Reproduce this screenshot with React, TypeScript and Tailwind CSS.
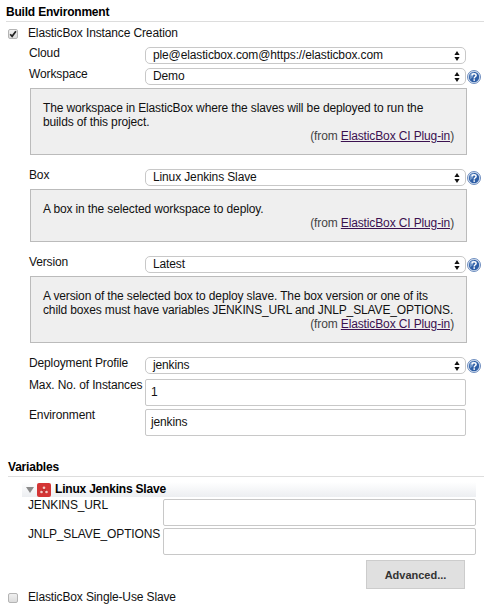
import type { ReactNode } from 'react';

function Checkbox({ checked = false }: { checked?: boolean }) {
  return (
    <span className="flex h-[10px] w-[10px] shrink-0 items-center justify-center rounded-[2px] border border-[#b4b4b4] bg-linear-to-b from-[#f0f0f0] to-[#dcdcdc]">
      {checked && (
        <svg viewBox="0 0 8 8" className="h-2 w-2 shrink-0" fill="none" stroke="#222" strokeWidth="1.7">
          <path d="M1.2 4.2 L3.1 6.3 L6.9 1.2" />
        </svg>
      )}
    </span>
  );
}

function HelpIcon() {
  return (
    <svg viewBox="0 0 14 14" className="mt-[2px] ml-px h-[14px] w-[14px] shrink-0">
      <circle cx="7" cy="7" r="6.5" fill="#dfe8f4" stroke="#5f81b8" strokeWidth="0.9" />
      <circle cx="7" cy="7" r="5.2" fill="#2f5fa6" />
      <path d="M2.6 5.4 A4.7 4.7 0 0 1 7 2.2 L6 7 L3 9.4 Z" fill="#7398cb" />
      <path d="M5 5.4 C5 3.1 9.1 3.1 9.1 5.4 C9.1 6.8 7.2 6.7 7.2 8.4" fill="none" stroke="#fff" strokeWidth="1.5" />
      <rect x="6.4" y="9.3" width="1.6" height="1.5" fill="#fff" />
    </svg>
  );
}

function Label({ children }: { children: ReactNode }) {
  return <div className="w-[116px] shrink-0 whitespace-nowrap">{children}</div>;
}

function SelectRow({ label, value, help = false }: { label: string; value: string; help?: boolean }) {
  return (
    <div className="flex h-[17px] pl-[29px]">
      <div className="-mt-px">
        <Label>{label}</Label>
      </div>
      <div className="flex h-[17px] w-[321px] shrink-0 items-start justify-between rounded-[5px] border border-[#c8c8c8] bg-white pr-[5px] pl-[7px]">
        <span>{value}</span>
        <svg viewBox="0 0 6 10" className="mt-[3px] h-[10px] w-[6px]" fill="#111">
          <path d="M3 0 L5.6 4 H0.4 Z M3 10 L5.6 6 H0.4 Z" />
        </svg>
      </div>
      {help && <HelpIcon />}
    </div>
  );
}

function HelpPanel({ children }: { children: ReactNode }) {
  return (
    <div className="mt-[3px] ml-[30px] w-[437px] border border-[#bbb] bg-[#efefef] pt-[12px] pr-[12px] pb-[11px] pl-[12px] whitespace-nowrap">
      {children}
      <div className="text-right text-[#444]">
        (from <span className="text-[#3b1150] underline">ElasticBox CI Plug-in</span>)
      </div>
    </div>
  );
}

function InputRow({ label, value }: { label: string; value: string }) {
  return (
    <div className="flex h-[27px] pl-[29px]">
      <div className="-mt-px">
        <Label>{label}</Label>
      </div>
      <div className="h-[27px] w-[321px] rounded-[2px] border border-[#c8c8c8] bg-white pt-[5px] pl-[5px]">{value}</div>
    </div>
  );
}

function VariableRow({ name }: { name: string }) {
  return (
    <div className="flex h-[27px] pl-[28px]">
      <div className="-mt-px w-[135px] shrink-0 whitespace-nowrap">{name}</div>
      <div className="h-[27px] w-[313px] rounded-[2px] border border-[#c8c8c8] bg-white" />
    </div>
  );
}

export default function App() {
  return (
    <div className="h-[611px] w-[491px] overflow-hidden bg-white font-['Liberation_Sans',Arial,sans-serif] text-[12px] leading-[14px] tracking-[-0.13px] text-[#111]">
      <div className="ml-[6px] h-[22px] w-[478px] border-b border-[#ddd] pt-[5px] font-bold tracking-[-0.2px] text-black">
        Build Environment
      </div>
      <div className="flex h-[25px] items-start gap-[10px] pt-[4px] pl-[8px]">
        <div className="mt-[3px]">
          <Checkbox checked />
        </div>
        <span>ElasticBox Instance Creation</span>
      </div>
      <SelectRow label="Cloud" value="ple@elasticbox.com@https://elasticbox.com" />
      <div className="h-1" />
      <SelectRow label="Workspace" value="Demo" help />
      <HelpPanel>
        The workspace in ElasticBox where the slaves will be deployed to run the
        <br />
        builds of this project.
      </HelpPanel>
      <div className="h-[14px]" />
      <SelectRow label="Box" value="Linux Jenkins Slave" help />
      <HelpPanel>A box in the selected workspace to deploy.</HelpPanel>
      <div className="h-[14px]" />
      <SelectRow label="Version" value="Latest" help />
      <HelpPanel>
        A version of the selected box to deploy slave. The box version or one of its
        <br />
        child boxes must have variables JENKINS_URL and JNLP_SLAVE_OPTIONS.
      </HelpPanel>
      <div className="h-[14px]" />
      <SelectRow label="Deployment Profile" value="jenkins" help />
      <div className="mt-[5px] flex flex-col gap-[3px]">
        <InputRow label="Max. No. of Instances" value="1" />
        <InputRow label="Environment" value="jenkins" />
      </div>
      <div className="mt-[24px] ml-[8px] h-[17px] w-[476px] border-b border-[#ddd] font-bold tracking-[-0.2px] text-black">
        Variables
      </div>
      <div className="mt-[5px] ml-[22px] flex h-[15px] w-[454px] items-start bg-linear-to-b from-white to-[#eceef1] font-bold tracking-[-0.2px] text-black">
        <svg viewBox="0 0 8 6" className="mt-[5px] ml-1 h-[6px] w-2" fill="#8c8c8c">
          <path d="M0 0 H8 L4 6 Z" />
        </svg>
        <svg viewBox="0 0 14 14" className="mt-px ml-[3px] h-[14px] w-[14px]">
          <rect width="14" height="14" rx="2" fill="#d43535" />
          <path d="M7 4.7 L4.5 9 H9.5 Z" fill="none" stroke="#a32626" strokeWidth="0.8" />
          <circle cx="7" cy="4.7" r="1.3" fill="#f5cfc9" />
          <circle cx="4.5" cy="9" r="1.3" fill="#f5cfc9" />
          <circle cx="9.5" cy="9" r="1.3" fill="#f5cfc9" />
        </svg>
        <span className="ml-1">Linux Jenkins Slave</span>
      </div>
      <div className="mt-[2px] flex flex-col gap-[2px]">
        <VariableRow name="JENKINS_URL" />
        <VariableRow name="JNLP_SLAVE_OPTIONS" />
      </div>
      <div className="mt-[5px] ml-[366px] flex h-[29px] w-[99px] items-center justify-center border border-[#ccc] bg-[#e0e0e0] text-[11px] font-bold tracking-normal text-[#333]">
        Advanced...
      </div>
      <div className="mt-px flex items-start gap-[10px] pl-[8px]">
        <div className="mt-[3px]">
          <Checkbox />
        </div>
        <span>ElasticBox Single-Use Slave</span>
      </div>
    </div>
  );
}
